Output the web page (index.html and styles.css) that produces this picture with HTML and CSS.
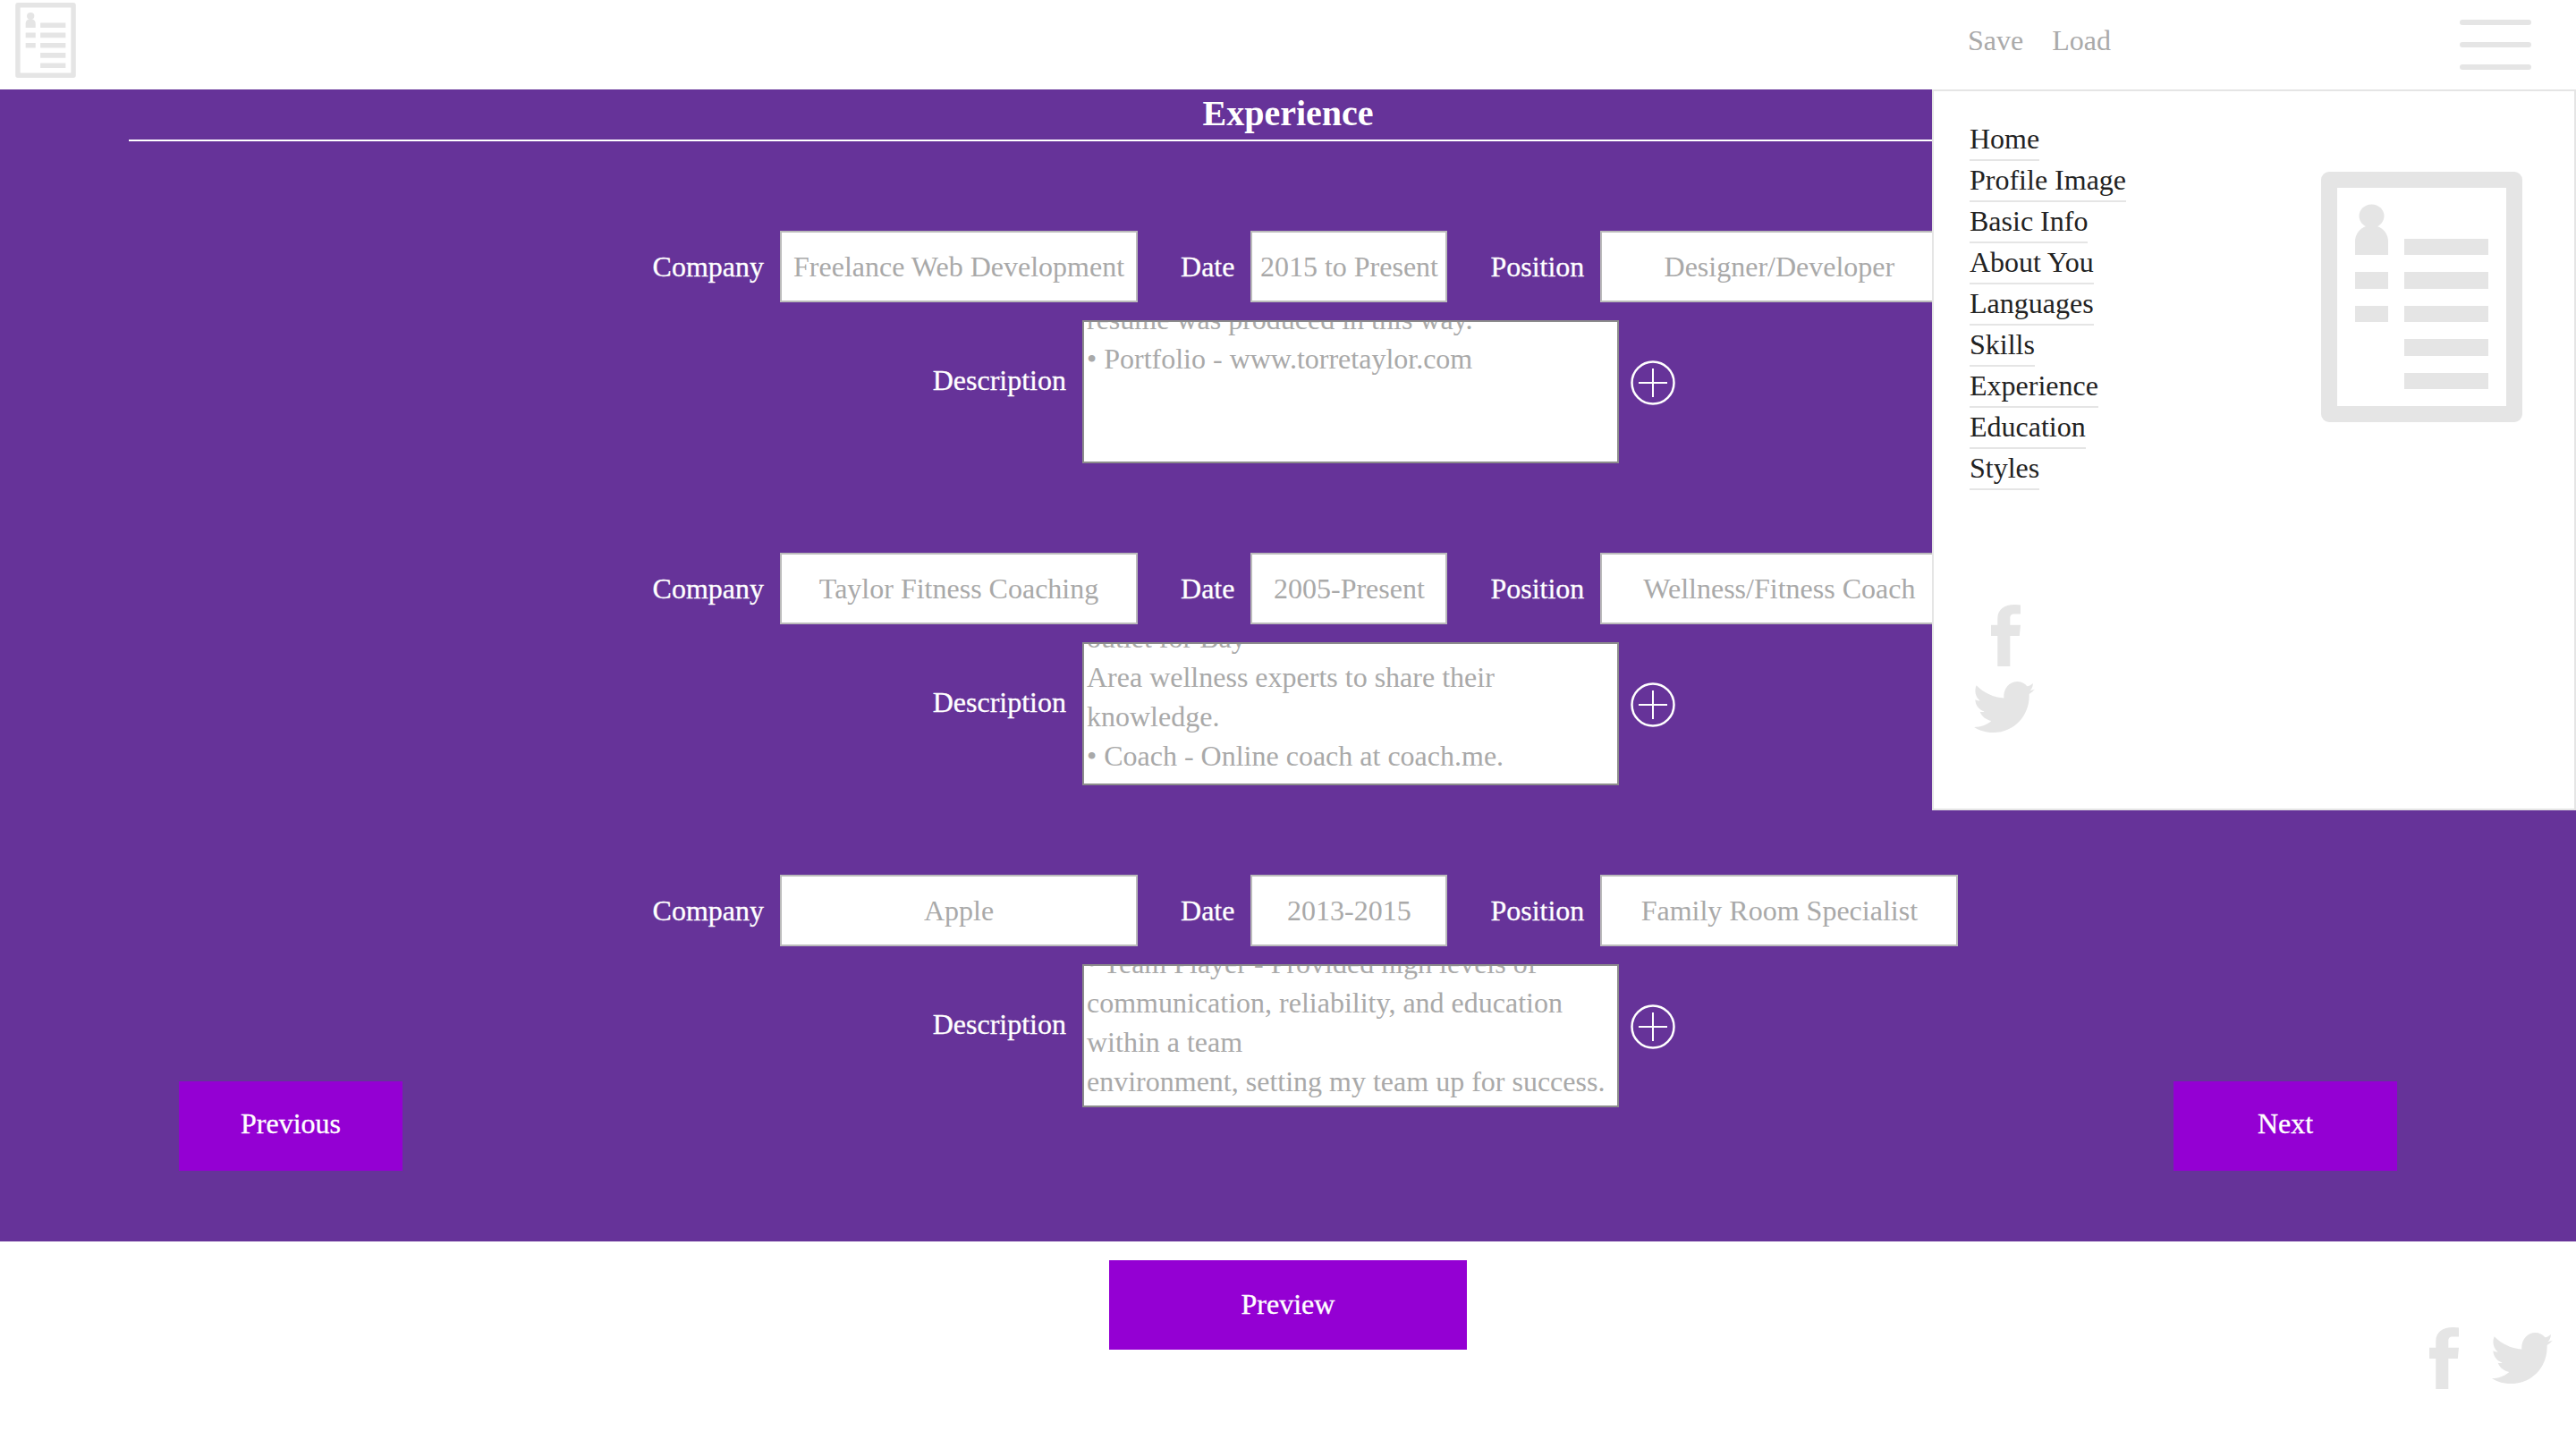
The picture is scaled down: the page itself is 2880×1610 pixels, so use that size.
FILE: index.html
```html
<!DOCTYPE html>
<html lang="en">
<head>
  <meta charset="UTF-8" />
  <title>Resume Builder</title>
  <link rel="stylesheet" href="styles.css">
</head>
<body>
  <svg class="icon-defs" width="0" height="0" aria-hidden="true">
    <symbol id="resume" viewBox="0 0 225 280">
      <path fill="#e5e5e5" fill-rule="evenodd" d="M9 0h207a9 9 0 0 1 9 9v262a9 9 0 0 1-9 9H9a9 9 0 0 1-9-9V9a9 9 0 0 1 9-9zM18 18v244h189V18z" />
      <ellipse fill="#e5e5e5" cx="56.5" cy="49.5" rx="14" ry="13" />
      <path fill="#e5e5e5" d="M38 93V78c0-10 8-18 18.500-18S75 68 75 78v15z" />
      <path fill="#e5e5e5" d="M38 112h37v19H38zM38 150h37v18H38zM93 75h94v18H93zM93 112h94v19H93zM93 150h94v18H93zM93 187h94v19H93zM93 225h94v18H93z" />
    </symbol>
    <symbol id="facebook" viewBox="0 0 33 69">
      <path fill="#e5e5e5" d="M21.300 69V35h10.500L33 22.700H21.300V15.500c0-3.500 1-5 5.200-5H33V.5C31.600.3 29 0 26 0 15 0 7.300 5.500 7.300 15.500v7.200H0V35h7.300v34z" />
    </symbol>
    <symbol id="twitter" viewBox="18 29 204 172" preserveAspectRatio="none">
      <path fill="#e5e5e5" d="M216 35C209 41 203 44 196 45C188 35 177 29 163 29C137 29 115 53 118 85C85 83 50 67 26 42C18 60 23 82 38 94C32 94 27 92 22 90C23 110 36 125 53 130C48 132 43 132 38 131C44 147 58 158 76 162C60 176 40 183 18 183C38 196 60 201 83 201C155 201 203 142 203 78L203 71C210 67 217 62 222 55C216 58 210 59 205 60C211 56 215 46 216 35Z" />
    </symbol>
    <symbol id="plus" viewBox="0 0 50 50">
      <circle cx="25" cy="25" r="23.500" fill="none" stroke="#fff" stroke-width="2.500" />
      <path d="M9 25h32M25 9v32" fill="none" stroke="#fff" stroke-width="2" />
    </symbol>
  </svg>

  <header class="topbar">
    <svg class="logo-small"><use href="#resume" /></svg>
    <div class="topbar-right">
      <a class="top-link">Save</a>
      <a class="top-link">Load</a>
      <div class="burger"><span></span><span></span><span></span></div>
    </div>
  </header>

  <main class="section">
    <h1 class="section-title">Experience</h1>

    <form class="entries">
      <div class="entry">
        <div class="field-row">
          <label class="lbl">Company</label>
          <input class="inp inp-wide" type="text" placeholder="Freelance Web Development" />
          <label class="lbl lbl-gap">Date</label>
          <input class="inp inp-date" type="text" placeholder="2015 to Present" />
          <label class="lbl lbl-gap">Position</label>
          <input class="inp inp-wide" type="text" placeholder="Designer/Developer" />
        </div>
        <div class="desc-row">
          <label class="lbl lbl-desc">Description</label>
          <div class="desc">resume was produced in this way.
• Portfolio - www.torretaylor.com


</div>
          <svg class="add"><use href="#plus" /></svg>
        </div>
      </div>

      <div class="entry">
        <div class="field-row">
          <label class="lbl">Company</label>
          <input class="inp inp-wide" type="text" placeholder="Taylor Fitness Coaching" />
          <label class="lbl lbl-gap">Date</label>
          <input class="inp inp-date" type="text" placeholder="2005-Present" />
          <label class="lbl lbl-gap">Position</label>
          <input class="inp inp-wide" type="text" placeholder="Wellness/Fitness Coach" />
        </div>
        <div class="desc-row">
          <label class="lbl lbl-desc">Description</label>
          <div class="desc desc-scrolled">outlet for Bay
Area wellness experts to share their
knowledge.
• Coach - Online coach at coach.me.</div>
          <svg class="add"><use href="#plus" /></svg>
        </div>
      </div>

      <div class="entry">
        <div class="field-row">
          <label class="lbl">Company</label>
          <input class="inp inp-wide" type="text" placeholder="Apple" />
          <label class="lbl lbl-gap">Date</label>
          <input class="inp inp-date" type="text" placeholder="2013-2015" />
          <label class="lbl lbl-gap">Position</label>
          <input class="inp inp-wide" type="text" placeholder="Family Room Specialist" />
        </div>
        <div class="desc-row">
          <label class="lbl lbl-desc">Description</label>
          <div class="desc">• Team Player - Provided high levels of
communication, reliability, and education
within a team
environment, setting my team up for success.</div>
          <svg class="add"><use href="#plus" /></svg>
        </div>
      </div>
    </form>

    <div class="pager">
      <button class="btn btn-page" type="button">Previous</button>
      <button class="btn btn-page" type="button">Next</button>
    </div>
  </main>

  <footer class="foot">
    <div></div>
    <button class="btn btn-preview" type="button">Preview</button>
    <div class="foot-social">
      <svg class="fb"><use href="#facebook" /></svg>
      <svg class="tw"><use href="#twitter" /></svg>
    </div>
  </footer>

  <aside class="menu">
    <div class="menu-left">
      <ul class="menu-list">
        <li><a>Home</a></li>
        <li><a>Profile Image</a></li>
        <li><a>Basic Info</a></li>
        <li><a>About You</a></li>
        <li><a>Languages</a></li>
        <li><a>Skills</a></li>
        <li><a>Experience</a></li>
        <li><a>Education</a></li>
        <li><a>Styles</a></li>
      </ul>
      <div class="menu-social">
        <svg class="fb"><use href="#facebook" /></svg>
        <svg class="tw"><use href="#twitter" /></svg>
      </div>
    </div>
    <svg class="logo-big"><use href="#resume" /></svg>
  </aside>
</body>
</html>
```

FILE: styles.css
```css
* { box-sizing: border-box; }
html, body { margin: 0; padding: 0; }
body { font-family: "Liberation Serif", "Times New Roman", serif; font-size: 32px; background: #fff; height: 1610px; overflow: hidden; position: relative; }
.icon-defs { position: absolute; }

/* top bar */
.topbar { height: 100px; display: flex; justify-content: space-between; background: #fff; padding-left: 17px; }
.logo-small { width: 68px; height: 84px; margin-top: 3px; }
.topbar-right { display: flex; align-items: flex-start; padding-right: 50px; }
.top-link { color: #aaa; margin-top: 27px; margin-right: 32px; line-height: 37px; }
.burger { margin-left: 358px; margin-top: 22px; width: 80px; display: flex; flex-direction: column; gap: 19px; }
.burger span { display: block; height: 6px; background: #e5e5e5; border-radius: 3px; }

/* purple section */
.section { background: #663399; height: 1288px; }
.section-title { width: 90%; height: 58px; margin: 0 auto; border-bottom: 2px solid #fff; color: #fff; font-size: 40px; font-weight: bold; text-align: center; line-height: 54px; }
.entries { display: block; margin: 0; padding-top: 100px; }
.entry { margin-bottom: 100px; }
.entry:last-child { margin-bottom: 0; }
.field-row { display: flex; align-items: center; padding-left: 729.6px; height: 80px; }
.lbl { color: #fff; margin-right: 18px; flex: none; -webkit-text-stroke: 0.3px #fff; }
.lbl-gap { margin-left: 48px; }
.inp { height: 80px; border: 2px solid #bbb; background: #fff; font: inherit; text-align: center; padding: 0; flex: none; }
.inp::placeholder { color: #a9a9a9; opacity: 1; }
.inp-wide { width: 400px; }
.inp-date { width: 220px; }
.desc-row { display: flex; align-items: flex-start; margin-top: 20px; padding-left: 1042.7px; }
.lbl-desc { margin-top: 49px; }
.desc { width: 600px; height: 160px; border: 2px solid #8c8c8c; background: #fff; color: #a9a9a9; padding: 0 3px 5px; line-height: 44px; white-space: pre; overflow: hidden; display: flex; flex-direction: column; justify-content: flex-end; }
.desc-scrolled { padding-bottom: 9px; }
.add { width: 50px; height: 50px; margin: 45px 0 0 13.3px; }

.pager { display: flex; justify-content: space-between; padding: 0 200px; margin-top: -29px; }
.btn { border: 0; background: #9400d3; color: #fff; font: inherit; padding: 0; -webkit-text-stroke: 0.3px #fff; }
.btn-page { width: 250px; height: 100px; padding-bottom: 5px; }

/* footer */
.foot { height: 222px; display: grid; grid-template-columns: 1fr 400px 1fr; }
.btn-preview { height: 100px; margin-top: 21px; padding-bottom: 2px; }
.foot-social { display: flex; justify-content: flex-end; align-items: flex-start; padding: 96px 26px 0 0; }
.foot-social .tw { margin: 6px 0 0 37px; }
.fb { width: 33px; height: 69px; display: block; }
.tw { width: 68px; height: 57px; display: block; }

/* slide out menu */
.menu { position: absolute; top: 100px; right: 0; width: 720px; height: 806px; background: #fff; border: 2px solid #e5e5e5; display: flex; justify-content: space-between; padding: 32px 58px 0 40px; }
.menu-list { list-style: none; margin: 0; padding: 0; }
.menu-list li { height: 46px; }
.menu-list a { display: inline-block; height: 46px; line-height: 43px; color: #222; border-bottom: 2px solid #e5e5e5; }
.menu-social { margin-top: 128px; }
.menu-social .fb { margin-left: 24px; }
.menu-social .tw { margin: 17px 0 0 5px; }
.logo-big { width: 225px; height: 280px; margin-top: 58px; }
```
